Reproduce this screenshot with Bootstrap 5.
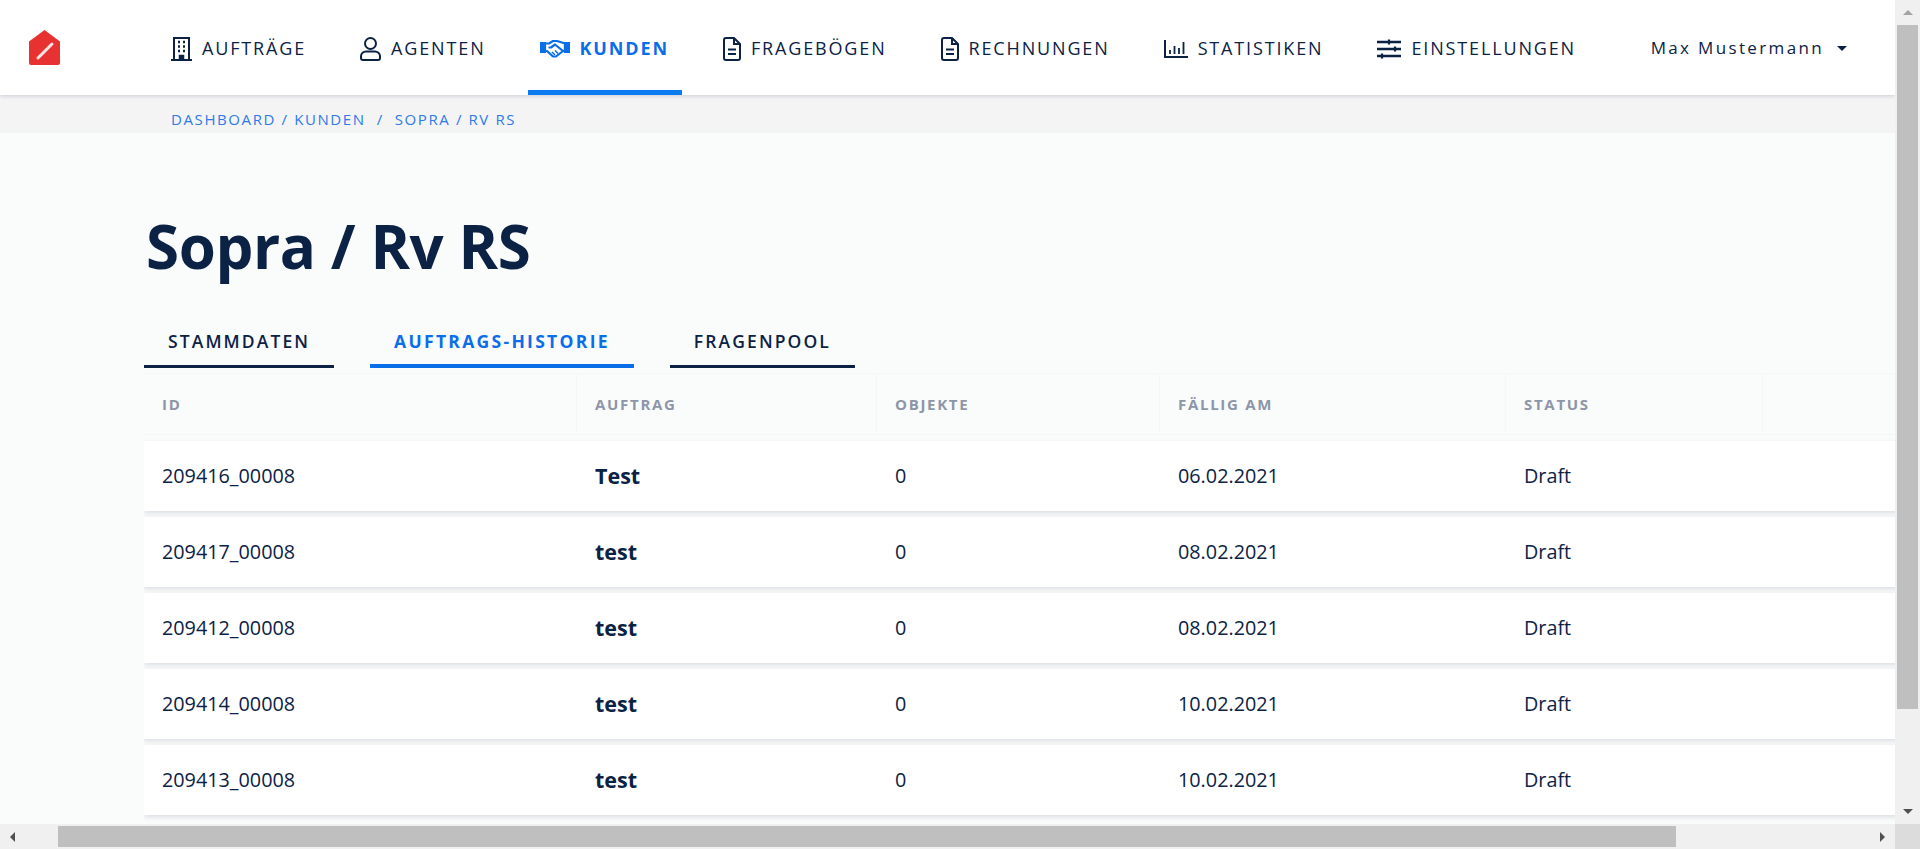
<!DOCTYPE html>
<html lang="de">

<head>
    <meta charset="UTF-8">
    <meta name="viewport" content="width=device-width, initial-scale=1.0">
    <title>Sopra / Rv RS</title>
    <link href="https://cdn.jsdelivr.net/npm/bootstrap@5.3.2/dist/css/bootstrap.min.css" rel="stylesheet">
    <style>
        html, body { height: 100%; overflow: hidden; }
        body { font-family: "Open Sans", "Noto Sans", sans-serif; background: #fafbfb; color: #0b2245; }

        .app-frame { height: 849px; }
        .page-area { min-width: 0; min-height: 0; background: #fafbfb; }

        .top-bar { height: 95px; padding: 0; background: #fff; box-shadow: 0 1px 4px rgba(11, 34, 69, .18); position: relative; z-index: 2; }
        .logo-box { width: 159px; padding-left: 29px; flex: none; }
        .top-bar .navbar-nav .nav-link { height: 95px; padding: 7px 13px 0 12px; margin-right: 29px; display: flex; align-items: center; gap: 10px; color: #0b2245; font-size: 18px; letter-spacing: 1.85px; text-transform: uppercase; border-bottom: 5px solid transparent; white-space: nowrap; }
        .top-bar .navbar-nav .nav-link.active { color: #0a6ee8; font-weight: 700; border-bottom-color: #0a7cf0; }
        .user-menu { margin-left: auto; margin-right: 48px; padding-top: 1px; font-size: 17px; letter-spacing: 2.35px; color: #0b2245; display: flex; align-items: center; gap: 13px; white-space: nowrap; }
        .user-caret { width: 0; height: 0; border-left: 5px solid transparent; border-right: 5px solid transparent; border-top: 5px solid #0b2245; }

        .crumb-band { height: 38px; background: #f4f4f5; padding-left: 171px; padding-top: 13px; font-size: 15px; line-height: 22px; letter-spacing: 1.6px; color: #2f7be8; white-space: nowrap; }

        .page-title { font-size: 60px; font-weight: 700; letter-spacing: -.4px; line-height: 80px; margin: 73px 0 0 146px; color: #0b2245; }

        .tab-row { margin: 43px 0 0 144px; gap: 36px; }
        .tab-item { padding: 0 24px 12px; font-size: 17.5px; font-weight: 600; letter-spacing: 2.1px; line-height: 24px; color: #0b2245; text-transform: uppercase; border-bottom: 3px solid #0b2245; text-decoration: none; }
        .tab-item.active { color: #0a6ee8; font-weight: 700; letter-spacing: 2.3px; border-bottom: 4px solid #0a6ee8; padding-bottom: 11px; }

        .table-clip { margin-left: 144px; overflow: hidden; padding-bottom: 10px; }
        .order-table { width: 2016px; table-layout: fixed; border-collapse: separate; border-spacing: 0 6px; margin: -1px 0 0; }
        .order-table th { height: 62px; padding: 0 18px; background: #fafbfb; border: 1px solid #f5f6f6; border-width: 1px 1px 1px 0; font-size: 15px; font-weight: 700; letter-spacing: 1.7px; color: #8d96a8; text-transform: uppercase; vertical-align: middle; }
        .order-table td { height: 70px; padding: 0 18px; background: #fff; border: 0; font-size: 19.8px; color: #0b2245; vertical-align: middle; }
        .order-table tbody tr { box-shadow: 0 2px 5px rgba(11, 34, 69, .13); }
        .order-table .job-name { font-size: 21.5px; font-weight: 700; }
        .col-id { width: 433px; }
        .col-job { width: 300px; }
        .col-count { width: 283px; }
        .col-due { width: 346px; }
        .col-state { width: 257px; }

        .scroll-v { width: 25px; background: #f0f0f0; }
        .scroll-h { height: 25px; background: #f0f0f0; }
        .scroll-btn { flex: 0 0 25px; }
        .scroll-v .scroll-btn { height: 25px; }
        .thumb-v { height: 684px; width: 21px; margin-left: 2px; background: #bfbfbf; }
        .track-fill { flex: 1 1 auto; }
        .scroll-h .scroll-btn { width: 25px; }
        .thumb-h { width: 1618px; height: 21px; margin: 2px 0 0 33px; background: #bfbfbf; }
        .scroll-corner { flex: 0 0 25px; background: #dcdcdc; }
        .arrow-up { width: 0; height: 0; border-left: 5px solid transparent; border-right: 5px solid transparent; border-bottom: 5px solid #a3a3a3; }
        .arrow-down { width: 0; height: 0; border-left: 5px solid transparent; border-right: 5px solid transparent; border-top: 5px solid #505050; }
        .arrow-left { width: 0; height: 0; border-top: 5px solid transparent; border-bottom: 5px solid transparent; border-right: 5px solid #505050; }
        .arrow-right { width: 0; height: 0; border-top: 5px solid transparent; border-bottom: 5px solid transparent; border-left: 5px solid #505050; }
        .nav-ico { flex: none; display: block; }
    </style>
</head>

<body>
    <div class="app-frame d-flex flex-column">
        <div class="d-flex flex-grow-1" style="min-height:0">
            <div class="page-area flex-grow-1 overflow-hidden">
                <nav class="navbar navbar-expand top-bar flex-nowrap">
                    <a class="logo-box d-block" href="#">
                        <svg class="nav-ico" width="31" height="35" viewBox="0 0 31 35">
                            <path d="M15.5 0 L31 11.5 V33 a2 2 0 0 1-2 2 H2 a2 2 0 0 1-2-2 V11.5 Z" fill="#e83232" />
                            <path d="M9 28 L23 14" stroke="#fbe4e4" stroke-width="3" stroke-linecap="round" />
                        </svg>
                    </a>
                    <ul class="navbar-nav flex-row">
                        <li class="nav-item">
                            <a class="nav-link" href="#">
                                <svg class="nav-ico" width="21" height="24" viewBox="0 0 21 24" fill="none" stroke="#0b2245">
                                    <path d="M3 23.5 V1 H18 V23.5" stroke-width="2" />
                                    <path d="M0 23 H21" stroke-width="2" />
                                    <path d="M7 5 h2 M12 5 h2 M7 9.500 h2 M12 9.500 h2 M7 14 h2 M12 14 h2" stroke-width="2.500" />
                                    <path d="M8.500 23 V18.500 H12.500 V23" stroke-width="1.500" fill="#0b2245" />
                                </svg>
                                Aufträge
                            </a>
                        </li>
                        <li class="nav-item">
                            <a class="nav-link" href="#">
                                <svg class="nav-ico" width="21" height="24" viewBox="0 0 21 24" fill="none" stroke="#0b2245" stroke-width="2">
                                    <circle cx="10.500" cy="6.500" r="5.500" />
                                    <path d="M6 14.500 H15 a5 5 0 0 1 5 4.500 V21 a2 2 0 0 1-2 2 H3 a2 2 0 0 1-2-2 V19 a5 5 0 0 1 5-4.500 Z" />
                                </svg>
                                Agenten
                            </a>
                        </li>
                        <li class="nav-item">
                            <a class="nav-link active" href="#">
                                <svg class="nav-ico" width="30" height="18" viewBox="0 0 30 18" fill="none" stroke="#0a6ee8" stroke-width="2.200">
                                    <path d="M0 3 H5 V12 H0" fill="#0a6ee8" />
                                    <path d="M30 3 H25 V12 H30" fill="#0a6ee8" />
                                    <path d="M5 3.500 H9 L13 1 H17 L25 3.500 V11 H23" stroke-linejoin="round" />
                                    <path d="M5 11 H7 L13 16.500 H16 L23 11 L15 4.500 L11 7.500 H8.500" stroke-linejoin="round" />
                                    <path d="M12 12 L15 15 M15 10.500 L18 13.500" stroke-width="1.500" />
                                </svg>
                                Kunden
                            </a>
                        </li>
                        <li class="nav-item">
                            <a class="nav-link" href="#">
                                <svg class="nav-ico" width="18" height="24" viewBox="0 0 18 24" fill="none" stroke="#0b2245" stroke-width="2">
                                    <path d="M3 1 H11 L17 7 V21 a2 2 0 0 1-2 2 H3 a2 2 0 0 1-2-2 V3 a2 2 0 0 1 2-2 Z" stroke-linejoin="round" />
                                    <path d="M11 1 V7 H17" />
                                    <path d="M5 12.500 H13 M5 17 H13" />
                                </svg>
                                Fragebögen
                            </a>
                        </li>
                        <li class="nav-item">
                            <a class="nav-link" href="#">
                                <svg class="nav-ico" width="18" height="24" viewBox="0 0 18 24" fill="none" stroke="#0b2245" stroke-width="2">
                                    <path d="M3 1 H11 L17 7 V21 a2 2 0 0 1-2 2 H3 a2 2 0 0 1-2-2 V3 a2 2 0 0 1 2-2 Z" stroke-linejoin="round" />
                                    <path d="M11 1 V7 H17" />
                                    <path d="M5 12.500 H13 M5 17 H13" />
                                </svg>
                                Rechnungen
                            </a>
                        </li>
                        <li class="nav-item">
                            <a class="nav-link" href="#">
                                <svg class="nav-ico" width="24" height="18" viewBox="0 0 24 18" fill="none" stroke="#0b2245">
                                    <path d="M1 0 V17 H24" stroke-width="2" />
                                    <path d="M6 10 V14 M10.500 6 V14 M15 8 V14 M19.500 2 V14" stroke-width="1.800" />
                                </svg>
                                Statistiken
                            </a>
                        </li>
                        <li class="nav-item">
                            <a class="nav-link" href="#">
                                <svg class="nav-ico" width="24" height="20" viewBox="0 0 24 20" fill="none" stroke="#0b2245">
                                    <path d="M0 3 H24 M0 10 H24 M0 17 H24" stroke-width="2.600" />
                                    <path d="M12 0.500 V5.500 M18 7.500 V12.500 M5 14.500 V19.500" stroke-width="2.200" />
                                </svg>
                                Einstellungen
                            </a>
                        </li>
                    </ul>
                    <div class="user-menu">Max Mustermann <span class="user-caret"></span></div>
                </nav>

                <div class="crumb-band">DASHBOARD / KUNDEN &nbsp;/&nbsp; SOPRA / RV RS</div>

                <h1 class="page-title">Sopra / Rv RS</h1>

                <div class="tab-row d-flex">
                    <a class="tab-item" href="#">Stammdaten</a>
                    <a class="tab-item active" href="#">Auftrags-Historie</a>
                    <a class="tab-item" href="#">Fragenpool</a>
                </div>

                <div class="table-clip">
                    <table class="order-table">
                        <colgroup>
                            <col class="col-id">
                            <col class="col-job">
                            <col class="col-count">
                            <col class="col-due">
                            <col class="col-state">
                            <col>
                        </colgroup>
                        <thead>
                            <tr>
                                <th>ID</th>
                                <th>Auftrag</th>
                                <th>Objekte</th>
                                <th>Fällig am</th>
                                <th>Status</th>
                                <th></th>
                            </tr>
                        </thead>
                        <tbody>
                            <tr><td>209416_00008</td><td class="job-name">Test</td><td>0</td><td>06.02.2021</td><td>Draft</td><td></td></tr>
                            <tr><td>209417_00008</td><td class="job-name">test</td><td>0</td><td>08.02.2021</td><td>Draft</td><td></td></tr>
                            <tr><td>209412_00008</td><td class="job-name">test</td><td>0</td><td>08.02.2021</td><td>Draft</td><td></td></tr>
                            <tr><td>209414_00008</td><td class="job-name">test</td><td>0</td><td>10.02.2021</td><td>Draft</td><td></td></tr>
                            <tr><td>209413_00008</td><td class="job-name">test</td><td>0</td><td>10.02.2021</td><td>Draft</td><td></td></tr>
                        </tbody>
                    </table>
                </div>
            </div>

            <div class="scroll-v d-flex flex-column flex-shrink-0">
                <div class="scroll-btn d-flex align-items-center justify-content-center"><span class="arrow-up"></span></div>
                <div class="thumb-v"></div>
                <div class="track-fill"></div>
                <div class="scroll-btn d-flex align-items-center justify-content-center"><span class="arrow-down"></span></div>
            </div>
        </div>

        <div class="scroll-h d-flex flex-shrink-0">
            <div class="scroll-btn d-flex align-items-center justify-content-center"><span class="arrow-left"></span></div>
            <div class="thumb-h"></div>
            <div class="track-fill"></div>
            <div class="scroll-btn d-flex align-items-center justify-content-center"><span class="arrow-right"></span></div>
            <div class="scroll-corner"></div>
        </div>
    </div>
    <script src="https://cdn.jsdelivr.net/npm/bootstrap@5.3.2/dist/js/bootstrap.bundle.min.js"></script>
</body>

</html>
